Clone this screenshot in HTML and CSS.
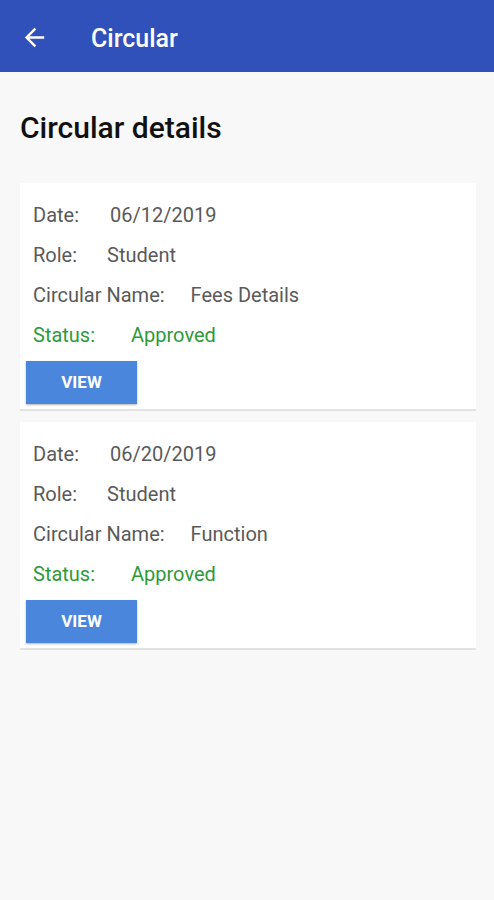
FILE: index.html
```html
<!DOCTYPE html>
<html lang="en">
<head>
    <meta charset="UTF-8">
    <title>Circular</title>
    <link rel="stylesheet" href="styles.css">
</head>
<body>
<div id="header">
    <span class="back">
        <svg width="29" height="29" viewBox="0 0 24 24"><path d="M20 11H7.83l5.59-5.59L12 4l-8 8 8 8 1.41-1.41L7.83 13H20v-2z" fill="#fff"/></svg>
    </span>
    <span class="title">Circular</span>
</div>
<div id="main">
    <h1>Circular details</h1>
    <div class="card">
        <div class="row"><span class="label l-date">Date:</span><span>06/12/2019</span></div>
        <div class="row"><span class="label l-role">Role:</span><span>Student</span></div>
        <div class="row"><span class="label l-name">Circular Name:</span><span>Fees Details</span></div>
        <div class="row status"><span class="label l-status">Status:</span><span>Approved</span></div>
        <div class="btn">VIEW</div>
    </div>
    <div class="card">
        <div class="row"><span class="label l-date">Date:</span><span>06/20/2019</span></div>
        <div class="row"><span class="label l-role">Role:</span><span>Student</span></div>
        <div class="row"><span class="label l-name">Circular Name:</span><span>Function</span></div>
        <div class="row status"><span class="label l-status">Status:</span><span>Approved</span></div>
        <div class="btn">VIEW</div>
    </div>
</div>
</body>
</html>
```

FILE: styles.css
```css
*{
    margin:0;
    padding:0;
}
body{
    background:#f8f8f8;
    font-family:Roboto, "Liberation Sans", sans-serif;
    width:494px;
    height:900px;
}
#header{
    height:72px;
    background:#2f51b9;
    display:flex;
    align-items:center;
    color:#fff;
}
#header .back{
    width:29px;
    height:29px;
    margin-left:20px;
    margin-top:3px;
}
#header .title{
    margin-left:42px;
    font-size:25px;
    font-weight:500;
    margin-top:4px;
}
#main{
    padding:0 18px 0 20px;
}
h1{
    font-size:30px;
    font-weight:500;
    color:#111;
    margin-top:38px;
    margin-bottom:37px;
    line-height:36px;
}
.card{
    background:#fff;
    border-bottom:2px solid #e2e2e2;
    padding:12px 6px 5px 6px;
    margin-bottom:11px;
}
.row{
    font-size:20px;
    color:#5a5a5a;
    line-height:40px;
    padding-left:7px;
    display:flex;
}
.label{
    margin-right:31px;
}
.l-role{
    margin-right:30px;
}
.l-name{
    margin-right:26px;
}
.l-status{
    margin-right:36px;
}
.status{
    color:#2e9a3a;
}
.btn{
    width:111px;
    height:43px;
    margin-top:6px;
    background:#4a86dc;
    color:#fff;
    font-size:17px;
    font-weight:bold;
    text-align:center;
    line-height:43px;
    box-shadow:0 1px 2px rgba(0,0,0,0.3);
}
```
